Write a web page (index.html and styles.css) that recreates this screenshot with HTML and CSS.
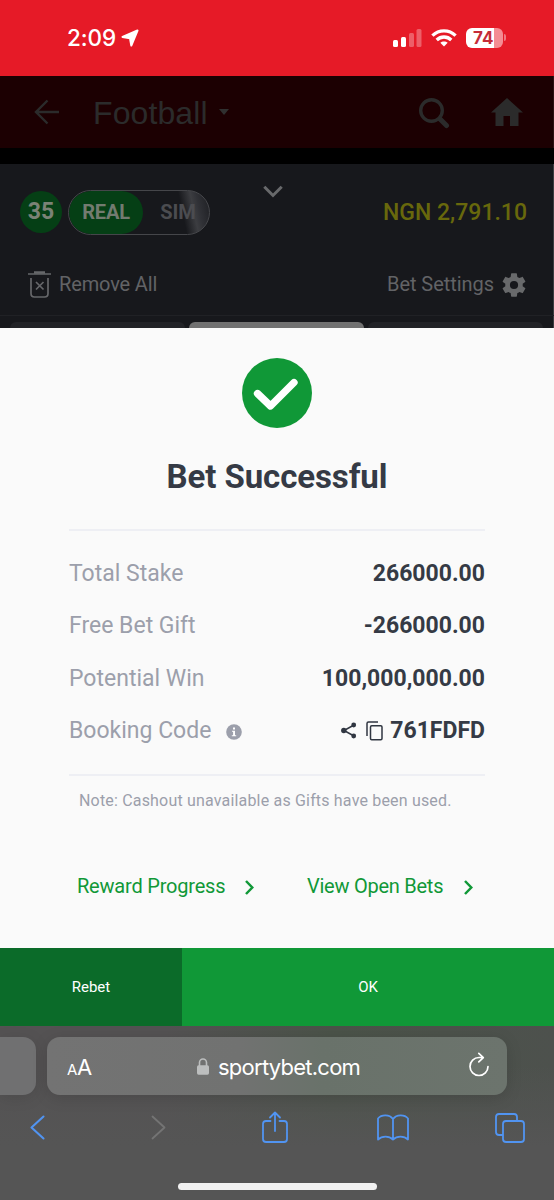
FILE: index.html
```html
<!DOCTYPE html>
<html lang="en">
<head>
<meta charset="utf-8">
<meta name="viewport" content="width=device-width">
<title>Bet Successful</title>
<link rel="stylesheet" href="styles.css">
</head>
<body>
<header class="status">
  <div class="clock"><span class="time">2:09</span>
    <svg class="arrow" width="18" height="18" viewBox="0 0 18 18"><path d="M16.500 1.500 10.300 16.500 9 9.200 1.500 8z" fill="#fff" stroke="#fff" stroke-width="2" stroke-linejoin="round"/></svg>
  </div>
  <div class="indicators">
    <svg width="29" height="18" viewBox="0 0 29 18" fill="#fff"><rect y="11" width="5" height="7" rx="1.500"/><rect x="8" y="8" width="5" height="10" rx="1.500"/><rect x="16" y="4" width="5" height="14" rx="1.500" opacity=".3"/><rect x="23.500" y="0" width="5" height="18" rx="1.500" opacity=".3"/></svg>
    <svg class="wifi" width="26" height="18" viewBox="0 0 26 18" fill="none" stroke="#fff" stroke-width="3.300"><path d="M1.400 6.600C8 .2 18 .2 24.600 6.600M5.700 11c4.200-4 10.400-4 14.600 0"/><path d="M13 17.500 9.300 13.800c2-1.900 5.400-1.900 7.400 0z" fill="#fff" stroke="none"/></svg>
    <div class="battery"><span>74</span></div><i class="nub"></i>
  </div>
</header>
<main class="page">
  <nav class="nav">
    <svg class="back" width="26" height="26" viewBox="0 0 26 26" fill="none" stroke="#2b2b2b" stroke-width="2.400"><path d="M25 13H2M13.500 1.500 2 13l11.500 11.500"/></svg>
    <span class="sport">Football</span><i class="caret"></i>
    <svg class="search" width="32" height="32" viewBox="0 0 32 32" fill="none" stroke="#2b2b2b"><circle cx="13.500" cy="13.500" r="10.800" stroke-width="3.400"/><path d="m22 22 6.500 6.500" stroke-width="5" stroke-linecap="round"/></svg>
    <svg width="32" height="28" viewBox="0 0 32 28" fill="#2b2b2b"><path d="M16 0 0 14.500h4.500V28h8V18h6.500v10h8.500V14.500H32z"/></svg>
  </nav>
  <section class="slip">
    <div class="account">
      <span class="count">35</span>
      <div class="mode"><span class="real">REAL</span><span class="sim">SIM</span></div>
      <svg class="collapse" width="20" height="13" viewBox="0 0 20 13" fill="none" stroke="#68696b" stroke-width="3"><path d="m1.300 1.800 8.700 8.700 8.700-8.700"/></svg>
      <span class="balance">NGN 2,791.10</span>
    </div>
    <div class="tools">
      <svg width="23" height="27" viewBox="0 0 23 27" fill="none" stroke="#66676a" stroke-width="1.700"><path d="M0 3h23M3 7v15.500Q3 26 6.500 26h10q3.500 0 3.500-3.500V7M8 11l7.500 7.500M15.500 11 8 18.500"/><path d="M6 1.500h11" stroke-width="2.500"/></svg>
      <span class="remove">Remove All</span>
      <span class="settings">Bet Settings</span>
      <svg width="28" height="28" viewBox="0 0 24 24" fill="#68696b"><path d="M19.430 12.980c.04-.32.07-.64.07-.98s-.03-.66-.07-.98l2.110-1.650c.19-.15.24-.42.12-.64l-2-3.460c-.12-.22-.39-.3-.61-.22l-2.490 1c-.52-.4-1.080-.73-1.690-.98l-.38-2.650C14.460 2.180 14.250 2 14 2h-4c-.25 0-.46.18-.49.42l-.38 2.650c-.61.25-1.170.59-1.690.98l-2.490-1c-.23-.09-.49 0-.61.22l-2 3.460c-.13.22-.07.49.12.64l2.110 1.650c-.04.32-.07.65-.07.98s.03.66.07.98l-2.110 1.650c-.19.15-.24.42-.12.64l2 3.460c.12.22.39.3.61.22l2.490-1c.52.4 1.080.73 1.690.98l.38 2.650c.03.24.24.42.49.42h4c.25 0 .46-.18.49-.42l.38-2.650c.61-.25 1.170-.59 1.690-.98l2.490 1c.23.09.49 0 .61-.22l2-3.460c.12-.22.07-.49-.12-.64zM12 15.500a3.500 3.500 0 1 1 0-7 3.500 3.500 0 0 1 0 7z"/></svg>
    </div>
    <div class="tabs"><i></i><i class="active"></i><i></i></div>
  </section>
  <section class="modal">
    <svg class="success" width="70" height="70" viewBox="0 0 70 70"><circle cx="35" cy="35" r="35" fill="#109837"/><path d="m15.500 35.500 13 12.500 23.500-23.500" fill="none" stroke="#fff" stroke-width="7.300" stroke-linecap="round" stroke-linejoin="round"/></svg>
    <h1>Bet Successful</h1>
    <dl class="details">
      <div><dt>Total Stake</dt><dd>266000.00</dd></div>
      <div><dt>Free Bet Gift</dt><dd>-266000.00</dd></div>
      <div><dt>Potential Win</dt><dd>100,000,000.00</dd></div>
      <div><dt>Booking Code
        <svg class="info" width="16" height="16" viewBox="0 0 16 16"><circle cx="8" cy="8" r="7.800" fill="#9c9fab"/><path d="M6 6.700h3v4.500h1.200v1H5.800v-1h1.300V7.700H6zM7 3.500h2v2H7z" fill="#fff"/></svg></dt>
        <dd><svg class="share" width="16" height="17" viewBox="0 0 16 17" fill="#303641"><path d="M13 3 3 8.500 13 14" fill="none" stroke="#303641" stroke-width="1.500"/><circle cx="12.700" cy="3" r="2.400"/><circle cx="2.800" cy="8.500" r="2.700"/><circle cx="12.700" cy="14" r="2.400"/></svg><svg class="copy" width="17" height="20" viewBox="0 0 17 20" fill="none" stroke="#303641" stroke-width="1.500"><path d="M1 15V2.500Q1 1 2.500 1H12"/><rect x="4.500" y="4.700" width="11.500" height="14" rx="1.200"/></svg>761FDFD</dd></div>
    </dl>
    <p class="note">Note: Cashout unavailable as Gifts have been used.</p>
    <div class="links">
      <span class="reward">Reward Progress</span><svg width="9" height="15" viewBox="0 0 9 15"><path d="m1 1 6.300 6.500L1 14" fill="none" stroke="#109837" stroke-width="2.500"/></svg>
      <span class="open">View Open Bets</span><svg width="9" height="15" viewBox="0 0 9 15"><path d="m1 1 6.300 6.500L1 14" fill="none" stroke="#109837" stroke-width="2.500"/></svg>
    </div>
  </section>
  <div class="actions"><div class="rebet">Rebet</div><div class="ok">OK</div></div>
</main>
<footer class="browser">
  <div class="address-row">
    <div class="previous"></div>
    <div class="address">
      <span class="reader"><small>A</small>A</span>
      <svg class="lock" width="12" height="17" viewBox="0 0 12 17"><path d="M2.500 8V4.500a3.500 3.500 0 0 1 7 0V8" fill="none" stroke="#bcbebe" stroke-width="1.600"/><rect y="7.200" width="12" height="9.500" rx="1.600" fill="#bcbebe"/></svg>
      <span class="domain">sportybet.com</span>
      <svg class="reload" width="22" height="26" viewBox="0 0 22 26" fill="none" stroke="#fff" stroke-width="1.700" stroke-linecap="round" stroke-linejoin="round"><path d="M20 14.500A9 9 0 1 1 11 5.500h4M10.800 1.400l4.500 4.200-4.500 4.300"/></svg>
    </div>
  </div>
  <div class="toolbar">
    <svg width="15" height="25" viewBox="0 0 15 25" fill="none" stroke="#5194f1" stroke-width="2.100" stroke-linecap="round" stroke-linejoin="round"><path d="M13.500 1.500 1.500 12.500l12 11"/></svg>
    <svg class="forward" width="15" height="25" viewBox="0 0 15 25" fill="none" stroke="#747474" stroke-width="1.800" stroke-linecap="round" stroke-linejoin="round"><path d="m1.500 1.500 12 11-12 11"/></svg>
    <svg class="upload" width="26" height="33" viewBox="0 0 26 33" fill="none" stroke="#5194f1" stroke-width="1.800" stroke-linecap="round" stroke-linejoin="round"><path d="M8.500 10H4q-3 0-3 3v15q0 3 3 3h18q3 0 3-3V13q0-3-3-3h-4.500M13 20V1.500M8 6.500l5-5 5 5"/></svg>
    <svg class="book" width="32" height="27" viewBox="0 0 32 27" fill="none" stroke="#5194f1" stroke-width="1.800" stroke-linejoin="round"><path d="M16 5v20.500M16 5C12.500.2 4.500.2 1 4.500v21c4-3.800 11-3.800 15 0 4-3.800 11-3.800 15 0v-21C27.500.2 19.500.2 16 5z"/></svg>
    <svg class="windows" width="30" height="30" viewBox="0 0 30 30" fill="none" stroke="#5194f1" stroke-width="1.800"><path d="M8 22H4q-3 0-3-3V4q0-3 3-3h15q3 0 3 3v4"/><rect x="8" y="8" width="21" height="21" rx="3"/></svg>
  </div>
  <div class="home-indicator"></div>
</footer>
</body>
</html>
```
FILE: styles.css
```css
* { box-sizing: border-box; }
body { margin: 0; width: 554px; height: 1200px; overflow: hidden; background: #555; font-family: Roboto, sans-serif; white-space: nowrap; }
svg { display: block; flex: none; }
span { flex: none; }
.status { height: 76px; background: #e61a27; color: #fff; display: flex; justify-content: space-between; padding: 0 48px 0 67px; font-family: Inter, sans-serif; }
.clock, .indicators { display: flex; align-items: center; height: 75px; }
.time { font-size: 22.500px; font-weight: 500; width: 54px; letter-spacing: -.1px; }
.arrow { margin-top: 1px; }
.wifi { margin: 0 9px; }
.battery { width: 37px; height: 20px; border-radius: 6px; background: linear-gradient(90deg, #fff 75%, #f48c93 75%); color: #c52c38; font: 700 17px/20px Inter, sans-serif; padding-left: 7px; }
.nub { width: 2px; height: 7px; border-radius: 0 2px 2px 0; background: #f17780; margin-left: 1px; }
.page { height: 950px; background: #fafafa; }
.nav { height: 72px; background: #1c0002; display: flex; align-items: center; padding: 0 30px 0 34px; border-right: 1px solid #2b1314; }
.sport { margin-left: 33px; width: 126px; font: 32px "Liberation Sans", sans-serif; color: #2b2b2b; padding-top: 3px; letter-spacing: .1px; }
.caret { border: 5.500px solid transparent; border-top: 6px solid #303030; border-bottom: 0; }
.search { margin: 2px 41px 0 auto; }
.slip { height: 180px; border-top: 16px solid #000; background: #17181c; display: flex; flex-direction: column; box-shadow: inset -1px 0 #3c3d40; }
.account { height: 95px; display: flex; align-items: center; padding: 1px 27px 0 20px; }
.count { width: 42px; height: 42px; border-radius: 50%; background: #053f15; color: #7b8276; font: 700 23px/42px Roboto, sans-serif; text-align: center; }
.mode { width: 142px; height: 45px; margin-left: 6px; border: 1px solid #45464a; border-radius: 23px; display: flex; overflow: hidden; background: linear-gradient(78deg, transparent 79%, #3c3d41 87%, #303136 91%, #1d1e22); font: 700 20px/43px Roboto, sans-serif; }
.real { width: 74px; border-radius: 22px; background: #053f15; color: #737b70; text-align: center; letter-spacing: -.2px; }
.sim { width: 70px; color: #4b4c50; text-align: center; }
.collapse { margin: 0 0 41px 53px; }
.balance { margin-left: auto; color: #68680c; font-size: 23px; font-weight: 500; }
.tools { height: 57px; display: flex; align-items: center; padding: 0 26px 6px 28px; font-size: 20px; color: #626366; border-bottom: 1px solid #202125; }
.tools svg { margin-top: 1px; }
.remove { margin-left: 8px; letter-spacing: -.15px; }
.settings { margin-left: auto; margin-right: 6px; letter-spacing: -.05px; }
.tabs { height: 12px; padding: 6px 10px 0; display: flex; gap: 4px; }
.tabs i { width: 175px; border-radius: 6px 6px 0 0; background: #222327; }
.tabs .active { background: #717171; }
.modal { height: 620px; background: #fafafa; padding: 30px 69px 0 69px; }
.success { margin-left: 173px; }
h1 { margin: 29px 0 0; color: #353a45; font-size: 33px; line-height: 40px; text-align: center; letter-spacing: -.1px; }
.details { margin: 32px 0 0; padding: 16px 0; border: solid #eeeff4; border-width: 2px 0; color: #9c9fab; font-size: 23px; height: 247px; }
.details div { height: 52.500px; display: flex; align-items: center; justify-content: space-between; }
dt, dd { display: flex; align-items: center; margin: 0; }
dd { color: #353a45; font-weight: 700; }
.info { margin: 3px 0 0 15px; }
.share { margin-right: 9px; }
.copy { margin-right: 7px; }
.note { margin: 15px 0 0 10px; color: #9c9fab; font-size: 16px; line-height: 20px; letter-spacing: .18px; }
.links { display: flex; align-items: center; margin: 63px 0 0 8px; height: 24px; font-size: 20px; color: #109837; }
.links svg { margin-top: 3px; }
.reward { width: 168px; letter-spacing: -.2px; }
.open { margin-left: 53px; width: 157px; letter-spacing: -.25px; }
.actions { height: 78px; display: flex; color: #fff; font-size: 15px; line-height: 78px; text-align: center; }
.rebet { width: 182px; background: #0b6b29; }
.ok { flex: 1; background: #109837; }
.browser { height: 174px; background: linear-gradient(rgba(85,85,85,0) 40px, #555 120px), linear-gradient(90deg, #545253 30%, #4b5349 60%, #4d514d); }
.address-row { display: flex; gap: 11px; padding-top: 11px; }
.previous { width: 36px; height: 58px; background: #707071; border-radius: 0 13px 13px 0; box-shadow: 0 3px 16px rgba(0,0,0,.1); }
.address { width: 460px; height: 58px; border-radius: 13px; background: linear-gradient(90deg, #737373, #717271 42%, #69726a 60%, #6c746d); display: flex; align-items: center; padding: 0 17px 0 20px; color: #fff; font-family: Inter, sans-serif; font-size: 22px; box-shadow: 0 3px 16px rgba(0,0,0,.13); }
.reader { width: 130px; padding-top: 2px; letter-spacing: -.3px; }
.reader small { font-size: 15px; }
.domain { margin-left: 9px; padding-top: 1px; letter-spacing: -.75px; }
.reload { margin: -2px 0 0 auto; }
.toolbar { height: 65px; display: flex; align-items: center; padding: 0 29px 0 30px; }
.forward { margin-left: 106px; }
.upload { margin: -1px 0 0 96px; }
.book { margin-left: 89px; }
.windows { margin-left: auto; }
.home-indicator { width: 199px; height: 7px; margin: 23px auto 0; border-radius: 4px; background: #f1f1f1; }
```
